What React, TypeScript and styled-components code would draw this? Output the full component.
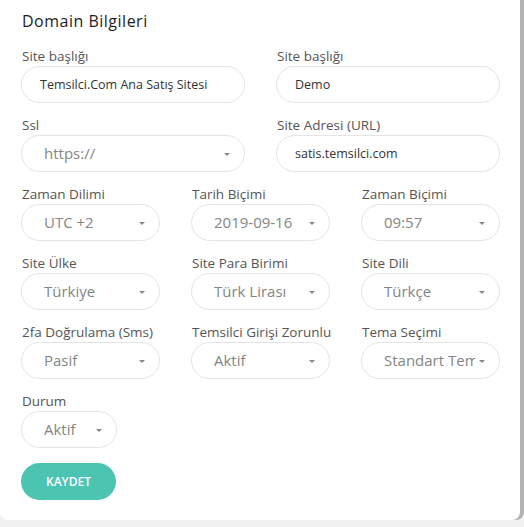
import React from 'react';
import styled, { createGlobalStyle } from 'styled-components';

const GlobalStyle = createGlobalStyle`
  html, body {
    margin: 0;
    padding: 0;
    background: #f1f1f1;
  }
  body {
    font-family: 'Open Sans', 'Liberation Sans', Arial, sans-serif;
    overflow: hidden;
  }
  * {
    box-sizing: border-box;
  }
`;

const Card = styled.div`
  width: 520px;
  background: #fff;
  border-radius: 0 0 8px 8px;
  box-shadow: 4px 0 0 #b3b3b3;
  padding: 11px 21px 20px 21px;
`;

const Title = styled.h2`
  margin: 0 0 17px 1px;
  font-size: 16px;
  line-height: 20px;
  font-weight: 500;
  letter-spacing: 0.5px;
  color: #1e1e1e;
`;

const Row = styled.div<{ cols: number }>`
  display: grid;
  grid-template-columns: ${p => (p.cols === 2 ? 'repeat(2, 224px)' : p.cols === 3 ? 'repeat(3, 139px)' : '96px')};
  column-gap: 31px;
  margin-bottom: 14px;
`;

const Field = styled.div`
  display: flex;
  flex-direction: column;
  gap: 2px;
`;

const Label = styled.label`
  font-size: 13.5px;
  line-height: 16px;
  color: #555;
  padding-left: 1px;
  white-space: nowrap;
`;

const TextInput = styled.input`
  height: 37px;
  width: 100%;
  border: 1px solid #e4e4e4;
  border-radius: 19px;
  padding: 0 10px 0 18px;
  font-family: inherit;
  font-size: 12.5px;
  color: #333;
  background: #fff;
  outline: none;
`;

const SelectBox = styled.div`
  height: 37px;
  border: 1px solid #e4e4e4;
  border-radius: 19px;
  padding: 0 14px 0 22px;
  display: flex;
  align-items: center;
  gap: 4px;
  background: #fff;
  cursor: pointer;
`;

const SelectValue = styled.span`
  flex: 1;
  overflow: hidden;
  white-space: nowrap;
  font-size: 15px;
  color: #858585;
  margin-top: -2px;
`;

const Caret = styled.span`
  width: 0;
  height: 0;
  border-left: 3px solid transparent;
  border-right: 3px solid transparent;
  border-top: 3px solid #888;
  flex-shrink: 0;
  margin-top: 2px;
`;

const SaveButton = styled.button`
  margin-top: 1px;
  width: 95px;
  height: 37px;
  border: none;
  border-radius: 19px;
  background: #4cc4b2;
  color: #fff;
  font-family: inherit;
  font-size: 12px;
  font-weight: 600;
  cursor: pointer;
`;

const Select: React.FC<{ value: string }> = ({ value }) => (
  <SelectBox>
    <SelectValue>{value}</SelectValue>
    <Caret />
  </SelectBox>
);

const App: React.FC = () => {
  return (
    <>
      <GlobalStyle />
      <Card>
        <Title>Domain Bilgileri</Title>
        <Row cols={2}>
          <Field>
            <Label>Site başlığı</Label>
            <TextInput defaultValue="Temsilci.Com Ana Satış Sitesi" />
          </Field>
          <Field>
            <Label>Site başlığı</Label>
            <TextInput defaultValue="Demo" />
          </Field>
        </Row>
        <Row cols={2}>
          <Field>
            <Label>Ssl</Label>
            <Select value="https://" />
          </Field>
          <Field>
            <Label>Site Adresi (URL)</Label>
            <TextInput defaultValue="satis.temsilci.com" />
          </Field>
        </Row>
        <Row cols={3}>
          <Field>
            <Label>Zaman Dilimi</Label>
            <Select value="UTC +2" />
          </Field>
          <Field>
            <Label>Tarih Biçimi</Label>
            <Select value="2019-09-16" />
          </Field>
          <Field>
            <Label>Zaman Biçimi</Label>
            <Select value="09:57" />
          </Field>
        </Row>
        <Row cols={3}>
          <Field>
            <Label>Site Ülke</Label>
            <Select value="Türkiye" />
          </Field>
          <Field>
            <Label>Site Para Birimi</Label>
            <Select value="Türk Lirası" />
          </Field>
          <Field>
            <Label>Site Dili</Label>
            <Select value="Türkçe" />
          </Field>
        </Row>
        <Row cols={3}>
          <Field>
            <Label>2fa Doğrulama (Sms)</Label>
            <Select value="Pasif" />
          </Field>
          <Field>
            <Label>Temsilci Girişi Zorunlu</Label>
            <Select value="Aktif" />
          </Field>
          <Field>
            <Label>Tema Seçimi</Label>
            <Select value="Standart Tema" />
          </Field>
        </Row>
        <Row cols={1}>
          <Field>
            <Label>Durum</Label>
            <Select value="Aktif" />
          </Field>
        </Row>
        <SaveButton>KAYDET</SaveButton>
      </Card>
    </>
  );
};

export default App;
